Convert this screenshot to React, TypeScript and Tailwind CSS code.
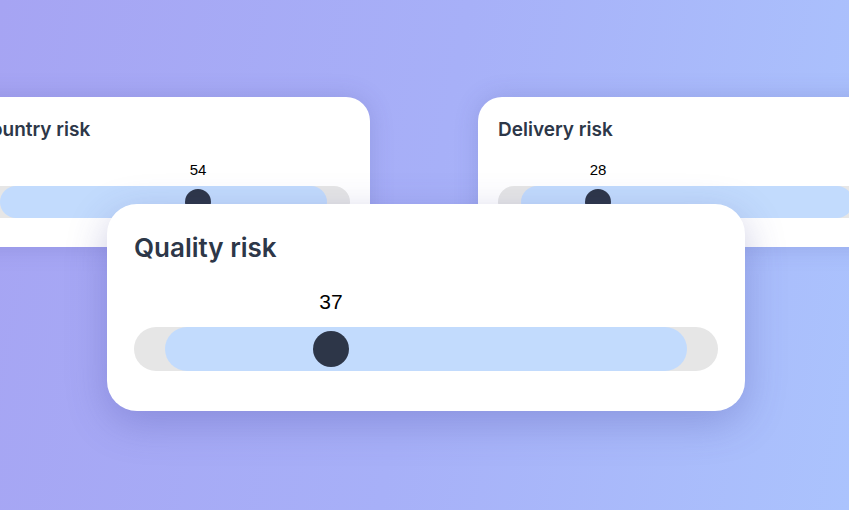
import React from "react";

type SliderProps = {
  value: number;
  thumbOffset: number;
  trackH: number;
  thumb: number;
  inset: number;
  labelClass: string;
  gap: number;
};

function Slider({ value, thumbOffset, trackH, thumb, inset, labelClass, gap }: SliderProps) {
  return (
    <div className="relative w-full">
      <div className="relative" style={{ height: 24 + gap }}>
        <span
          className={"absolute top-0 -translate-x-1/2 text-black leading-6 " + labelClass}
          style={{ left: thumbOffset, fontFamily: '"Liberation Sans", Arial, sans-serif' }}
        >
          {value}
        </span>
      </div>
      <div className="relative w-full rounded-full bg-[#e6e6e6]" style={{ height: trackH }}>
        <div
          className="absolute top-0 bottom-0 rounded-full bg-[#c2dbfd]"
          style={{ left: inset, right: inset }}
        />
        <div
          className="absolute rounded-full bg-[#2d3648]"
          style={{
            width: thumb,
            height: thumb,
            left: thumbOffset - thumb / 2,
            top: (trackH - thumb) / 2,
          }}
        />
      </div>
    </div>
  );
}

function BackCard({
  title,
  value,
  offset,
  wide,
}: {
  title: string;
  value: number;
  offset: number;
  wide?: boolean;
}) {
  return (
    <div
      className={
        (wide ? "w-[418px]" : "w-[413px]") +
        " h-[150px] shrink-0 rounded-[24px] bg-white px-5 pt-[21px] shadow-[0_0_24px_rgba(60,60,140,0.18)]"
      }
    >
      <h2 className="text-[19px] leading-6 font-semibold text-[#2d3748] whitespace-nowrap">{title}</h2>
      <div className="mt-[16px]">
        <Slider
          value={value}
          thumbOffset={offset}
          trackH={32}
          thumb={26}
          inset={23}
          labelClass="text-[15px]"
          gap={4}
        />
      </div>
    </div>
  );
}

export default function App() {
  return (
    <div
      className="w-[849px] h-[510px] overflow-hidden bg-[linear-gradient(100deg,#a6a4f3_0%,#a7b0f8_50%,#abc3fd_100%)] pt-[97px]"
      style={{ fontFamily: "Inter, 'Noto Sans', sans-serif" }}
    >
      <div className="flex gap-[108px] ml-[-43px]">
        <BackCard title="Country risk" value={54} offset={221} />
        <BackCard title="Delivery risk" value={28} offset={100} wide />
      </div>
      <div className="relative z-10 ml-[107px] mt-[-43px] w-[638px] h-[207px] rounded-[30px] bg-white px-[27px] pt-[28px] shadow-[0_12px_40px_rgba(60,60,150,0.28)]">
        <h1 className="text-[26px] leading-8 font-semibold text-[#2d3748]">Quality risk</h1>
        <div className="mt-[26px]">
          <Slider
            value={37}
            thumbOffset={197}
            trackH={44}
            thumb={36}
            inset={31}
            labelClass="text-[21px]"
            gap={13}
          />
        </div>
      </div>
    </div>
  );
}
